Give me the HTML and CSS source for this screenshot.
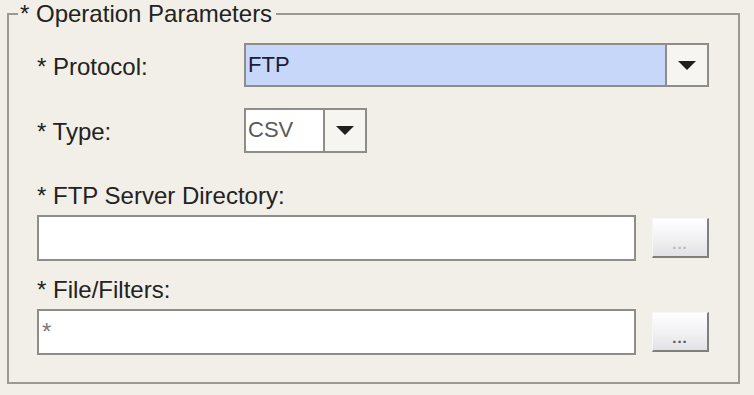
FILE: index.html
```html
<!DOCTYPE html>
<html lang="en">
  <head>
    <meta charset="UTF-8" />
    <meta name="viewport" content="width=device-width, initial-scale=1.0" />
    <title>Operation Parameters</title>
    <link rel="stylesheet" href="styles.css">
  </head>
  <body>
    <fieldset class="params">
      <legend>* Operation Parameters</legend>

      <div class="row">
        <label class="row-label">* Protocol:</label>
        <div class="combo combo-wide">
          <span class="combo-value selected">FTP</span>
          <span class="combo-arrow"><i></i></span>
        </div>
      </div>

      <div class="row">
        <label class="row-label">* Type:</label>
        <div class="combo combo-small">
          <span class="combo-value muted">CSV</span>
          <span class="combo-arrow"><i></i></span>
        </div>
      </div>

      <label class="field-label first">* FTP Server Directory:</label>
      <div class="field">
        <div class="field-input"></div>
        <button class="browse" disabled>...</button>
      </div>

      <label class="field-label">* File/Filters:</label>
      <div class="field">
        <div class="field-input"><span class="placeholder">*</span></div>
        <button class="browse">...</button>
      </div>
    </fieldset>
  </body>
</html>
```

FILE: styles.css
```css
* {
  margin: 0;
  padding: 0;
  box-sizing: border-box;
}

body {
  font-family: "Liberation Sans", Arial, sans-serif;
  background: #f1efe7;
  color: #222;
  width: 754px;
  height: 395px;
  overflow: hidden;
}

.params {
  margin: 1px 0 0 7px;
  width: 733px;
  height: 383px;
  border: 2px solid #9a9992;
  padding: 16px 28px 0 28px;
  min-width: 0;
}

.params legend {
  font-size: 24px;
  line-height: 26px;
  padding: 0 4px 0 2px;
  margin-left: -19px;
  color: #222;
}

.row {
  display: flex;
  align-items: center;
  height: 44px;
}

.row + .row {
  margin-top: 21px;
}

.row-label {
  width: 207px;
  font-size: 24px;
  line-height: 26px;
  padding-top: 3px;
}

.combo {
  display: flex;
  height: 44px;
  border: 2px solid #8e8d87;
}

.combo-wide {
  width: 465px;
}

.combo-small {
  width: 123px;
  height: 45px;
}

.combo-value {
  flex: 1;
  display: flex;
  align-items: center;
  padding-left: 2px;
  font-size: 22px;
  background: #ffffff;
}

.combo-value.selected {
  background: #c6d7f9;
  color: #1c1c38;
}

.combo-value.muted {
  color: #5a5a5a;
}

.combo-arrow {
  width: 42px;
  border-left: 2px solid #8e8d87;
  background: #f6f5f1;
  display: flex;
  align-items: center;
  justify-content: center;
}

.combo-arrow i {
  width: 0;
  height: 0;
  border-left: 9px solid transparent;
  border-right: 9px solid transparent;
  border-top: 9px solid #1f1f1f;
}

.field-label {
  display: block;
  margin-top: 16px;
  font-size: 24px;
  line-height: 26px;
}

.field-label.first {
  margin-top: 31px;
}

.field {
  display: flex;
  align-items: center;
  gap: 16px;
  margin-top: 6px;
}

.field-input {
  width: 599px;
  height: 46px;
  border: 2px solid #8e8d87;
  background: #ffffff;
  display: flex;
  align-items: center;
  padding-left: 3px;
}

.placeholder {
  font-size: 24px;
  color: #7a7a7a;
}

.browse {
  width: 57px;
  height: 40px;
  border-top: 1px solid #f7f7f7;
  border-left: 1px solid #f7f7f7;
  border-right: 2px solid #7f7f7c;
  border-bottom: 2px solid #7f7f7c;
  background: linear-gradient(#ffffff, #f1f1f3 55%, #e2e2e7);
  font-family: "Liberation Sans", Arial, sans-serif;
  font-size: 15px;
  font-weight: bold;
  line-height: 16px;
  letter-spacing: 1px;
  padding-top: 13px;
  color: #555;
}

.browse:disabled {
  color: #b8b8b8;
}
```
